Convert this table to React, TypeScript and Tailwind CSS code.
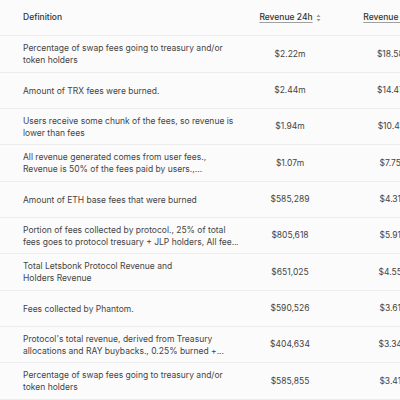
import { ReactNode } from 'react'

// definition text is shown as the lines the table wraps it into
const ROWS: { def: string[]; d1: string; d2: string }[] = [
  { def: ['Percentage of swap fees going to treasury and/or', 'token holders'], d1: '$2.22m', d2: '$18.58m' },
  { def: ['Amount of TRX fees were burned.'], d1: '$2.44m', d2: '$14.47m' },
  { def: ['Users receive some chunk of the fees, so revenue is', 'lower than fees'], d1: '$1.94m', d2: '$10.41m' },
  {
    def: ['All revenue generated comes from user fees.,', 'Revenue is 50% of the fees paid by users.,...'],
    d1: '$1.07m',
    d2: '$7.75m',
  },
  { def: ['Amount of ETH base fees that were burned'], d1: '$585,289', d2: '$4.31m' },
  {
    def: ['Portion of fees collected by protocol., 25% of total', 'fees goes to protocol tresuary + JLP holders, All fee...'],
    d1: '$805,618',
    d2: '$5.91m',
  },
  { def: ['Total Letsbonk Protocol Revenue and', 'Holders Revenue'], d1: '$651,025', d2: '$4.55m' },
  { def: ['Fees collected by Phantom.'], d1: '$590,526', d2: '$3.61m' },
  {
    def: ["Protocol's total revenue, derived from Treasury", 'allocations and RAY buybacks., 0.25% burned +...'],
    d1: '$404,634',
    d2: '$3.34m',
  },
  { def: ['Percentage of swap fees going to treasury and/or', 'token holders'], d1: '$585,855', d2: '$3.41m' },
]

function SortIcon() {
  return (
    <svg width="5" height="8" viewBox="0 0 5 8" className="ml-[3px] text-[#9a9a9a]">
      <path d="M2.5 0.5L4.5 3H0.5Z M2.5 7.5L4.5 5H0.5Z" fill="currentColor" />
    </svg>
  )
}

function HeaderCell({ children }: { children: ReactNode }) {
  return (
    <div className="w-[104px] shrink-0 flex items-center justify-center whitespace-nowrap">
      <span className="underline decoration-[#a0a0a0] underline-offset-2">{children}</span>
      <SortIcon />
    </div>
  )
}

export default function App() {
  return (
    <div
      className="w-[400px] h-[400px] overflow-hidden bg-[#fbfbfb] text-[#444] text-[8.5px] leading-[12.5px]"
      style={{ fontFamily: 'Inter, "Noto Sans", sans-serif' }}
    >
      <div className="w-[560px]">
        <div className="flex h-[36.33px] border-b border-[#ececec] font-medium text-[#333]">
          <div className="w-[238px] shrink-0 flex items-center pl-[23px]">Definition</div>
          <HeaderCell>Revenue 24h</HeaderCell>
          <HeaderCell>Revenue 30d</HeaderCell>
        </div>
        {ROWS.map((r, i) => (
          <div key={i} className="flex h-[36.33px] border-b border-[#ececec]">
            <div className="w-[238px] shrink-0 flex flex-col justify-center pl-[23px] pt-px whitespace-nowrap overflow-hidden">
              {r.def.map((line) => (
                <span key={line}>{line}</span>
              ))}
            </div>
            <div className="w-[104px] shrink-0 flex items-center justify-center">{r.d1}</div>
            <div className="w-[104px] shrink-0 flex items-center justify-center">{r.d2}</div>
          </div>
        ))}
      </div>
    </div>
  )
}
